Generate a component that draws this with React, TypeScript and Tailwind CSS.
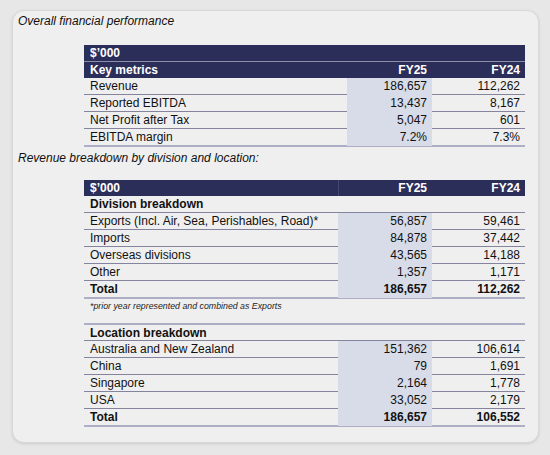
const font = { fontFamily: "'Liberation Sans', Arial, sans-serif" };

const metrics = [
  { label: "Revenue", fy25: "186,657", fy24: "112,262" },
  { label: "Reported EBITDA", fy25: "13,437", fy24: "8,167" },
  { label: "Net Profit after Tax", fy25: "5,047", fy24: "601" },
  { label: "EBITDA margin", fy25: "7.2%", fy24: "7.3%" },
];

const divisions = [
  { label: "Exports (Incl. Air, Sea, Perishables, Road)*", fy25: "56,857", fy24: "59,461" },
  { label: "Imports", fy25: "84,878", fy24: "37,442" },
  { label: "Overseas divisions", fy25: "43,565", fy24: "14,188" },
  { label: "Other", fy25: "1,357", fy24: "1,171" },
];

const locations = [
  { label: "Australia and New Zealand", fy25: "151,362", fy24: "106,614" },
  { label: "China", fy25: "79", fy24: "1,691" },
  { label: "Singapore", fy25: "2,164", fy24: "1,778" },
  { label: "USA", fy25: "33,052", fy24: "2,179" },
];

type Row = { label: string; fy25: string; fy24: string };

function BodyRow({ row, cols, last, bold }: { row: Row; cols: string; last?: boolean; bold?: boolean }) {
  return (
    <div
      className={`grid ${cols} text-[12px] leading-[17px] text-[#111] ${
        last ? "h-[18px] border-b-2 border-[#aeadc6]" : "h-[17px] border-b border-[#85849f]"
      } ${bold ? "font-bold" : ""}`}
    >
      <div className="pl-[6px] whitespace-nowrap">{row.label}</div>
      <div className="bg-[#d7dce8] text-right pr-[5px]">{row.fy25}</div>
      <div className="text-right pr-[5px]">{row.fy24}</div>
    </div>
  );
}

export default function App() {
  return (
    <div className="w-[550px] h-[455px] bg-[#e7e7e7] pt-[10px] pl-[12px]" style={font}>
      <div className="w-[527px] h-[433px] rounded-[12px] border border-[#d9d9d9] bg-[#efefef] shadow-[0_1px_3px_rgba(0,0,0,0.12)] flex flex-col">
        <div className="pl-[5px] pt-[3px] text-[12px] leading-[14px] italic text-[#111]">
          Overall financial performance
        </div>

        {/* Key metrics */}
        <div className="ml-[71px] mt-[17px] w-[441px]">
          <div className="h-[17px] bg-[#2c2e5a] border-b border-[#8d8ea9] text-white font-bold text-[12px] leading-[16px] pl-[6px]">
            $’000
          </div>
          <div className="grid grid-cols-[263px_85px_93px] h-[16px] bg-[#2c2e5a] text-white font-bold text-[12px] leading-[16px]">
            <div className="pl-[6px]">Key metrics</div>
            <div className="text-right pr-[5px]">FY25</div>
            <div className="text-right pr-[5px]">FY24</div>
          </div>
          {metrics.map((r, i) => (
            <BodyRow key={r.label} row={r} cols="grid-cols-[263px_85px_93px]" last={i === metrics.length - 1} />
          ))}
        </div>

        <div className="pl-[5px] mt-[4px] text-[12px] leading-[14px] italic text-[#111]">
          Revenue breakdown by division and location:
        </div>

        {/* Division / location */}
        <div className="ml-[71px] mt-[15px] w-[441px]">
          <div className="grid grid-cols-[254px_94px_93px] h-[16px] bg-[#2c2e5a] text-white font-bold text-[12px] leading-[16px]">
            <div className="pl-[6px]">$’000</div>
            <div className="text-right pr-[5px] border-l border-[#45476e]">FY25</div>
            <div className="text-right pr-[5px]">FY24</div>
          </div>
          <div className="h-[17px] border-b border-[#85849f] pl-[6px] text-[12px] leading-[17px] font-bold text-[#111]">
            Division breakdown
          </div>
          {divisions.map((r) => (
            <BodyRow key={r.label} row={r} cols="grid-cols-[254px_94px_93px]" />
          ))}
          <BodyRow row={{ label: "Total", fy25: "186,657", fy24: "112,262" }} cols="grid-cols-[254px_94px_93px]" last bold />
          <div className="mt-[2px] pl-[6px] text-[8.8px] leading-[10px] italic text-[#222]">
            *prior year represented and combined as Exports
          </div>

          <div className="mt-[12px] h-[18px] border-t-2 border-b border-t-[#aeadc6] border-b-[#85849f] pl-[6px] text-[12px] leading-[16px] font-bold text-[#111]">
            Location breakdown
          </div>
          {locations.map((r) => (
            <BodyRow key={r.label} row={r} cols="grid-cols-[254px_94px_93px]" />
          ))}
          <BodyRow row={{ label: "Total", fy25: "186,657", fy24: "106,552" }} cols="grid-cols-[254px_94px_93px]" last bold />
        </div>
      </div>
    </div>
  );
}
